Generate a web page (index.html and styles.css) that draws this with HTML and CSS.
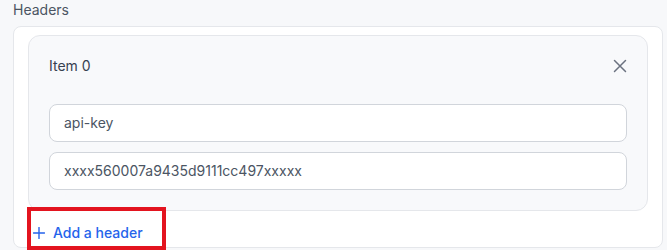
FILE: index.html
```html
<!DOCTYPE html>
<html>
<head>
<meta charset="utf-8">
<link rel="stylesheet" href="styles.css">
</head>
<body>
<div class="page">
  <div class="label">Headers</div>
  <div class="outer">
    <div class="item">
      <div class="item-head">
        <span class="item-title">Item 0</span>
        <svg class="close" width="14" height="14" viewBox="0 0 14 14"><path d="M1.5 1.5 L12.5 12.5 M12.5 1.5 L1.5 12.5" stroke="#6b7280" stroke-width="1.5" stroke-linecap="round" fill="none"/></svg>
      </div>
      <div class="fields">
        <div class="input">api-key</div>
        <div class="input">xxxx560007a9435d9111cc497xxxxx</div>
      </div>
    </div>
    <div class="add">
      <svg width="12" height="12" viewBox="0 0 12 12"><path d="M6 0.5 V11.5 M0.5 6 H11.5" stroke="#2563eb" stroke-width="1.4" stroke-linecap="round" fill="none"/></svg>
      <span>Add a header</span>
    </div>
  </div>
  <div class="highlight"></div>
</div>
</body>
</html>
```
FILE: styles.css
```css
html, body {
  margin: 0;
  padding: 0;
  background: #f7f8fa;
  font-family: Inter, "Noto Sans", sans-serif;
  font-size: 14px;
  line-height: 20px;
}
.page {
  position: relative;
  padding: 0 4px 0 13px;
  height: 250px;
  overflow: hidden;
}
.label {
  color: #4b5563;
  height: 20px;
  margin-bottom: 6px;
}
.outer {
  background: #fff;
  border: 1px solid #e5e7eb;
  border-radius: 8px;
  padding: 8px 14px 4px 14px;
}
.item {
  background: #f8f9fb;
  border: 1px solid #e5e7eb;
  border-radius: 12px;
  padding: 20px 20px 20px 20px;
}
.item-head {
  display: flex;
  align-items: center;
  justify-content: space-between;
  height: 20px;
  margin-bottom: 28px;
}
.item-title {
  color: #374151;
}
.close {
  margin-right: 0;
}
.fields {
  display: flex;
  flex-direction: column;
  gap: 10px;
}
.input {
  background: #fff;
  border: 1px solid #d1d5db;
  border-radius: 8px;
  height: 36px;
  line-height: 36px;
  padding: 0 14px;
  color: #4b5563;
}
.add {
  display: flex;
  align-items: center;
  gap: 8px;
  margin-top: 12px;
  padding-left: 5px;
  color: #2563eb;
  font-weight: 500;
  height: 20px;
}
.highlight {
  position: absolute;
  left: 27px;
  top: 207px;
  width: 131px;
  height: 35px;
  border: 4px solid #e3141f;
}
```
